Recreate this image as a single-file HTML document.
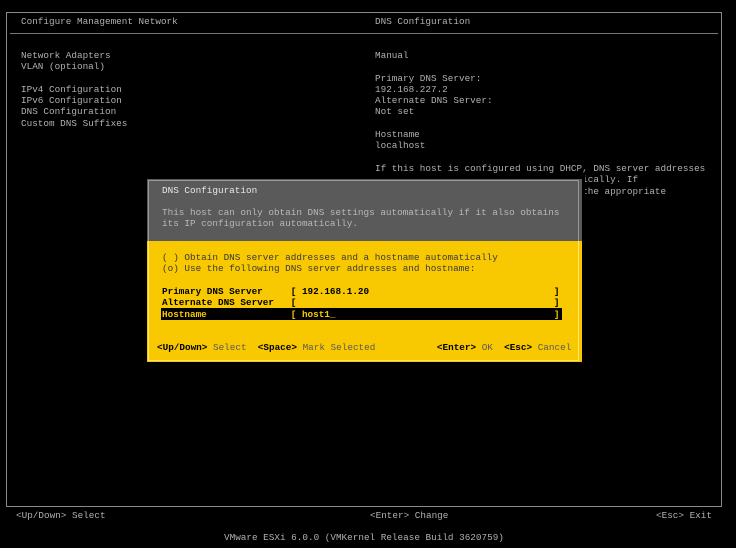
<!DOCTYPE html>
<html><head><style>
body{margin:0;width:736px;height:548px;background:#000;overflow:hidden;position:relative;font-family:"Liberation Mono",monospace;font-size:9.33px;line-height:11.3px;}
.t{position:absolute;white-space:pre;color:#b0b0b0}
.b{position:absolute}
</style></head><body>
<div class="b" style="left:6px;top:12px;width:714px;height:493px;border:1px solid #8a8a8a"></div>
<div class="b" style="left:10px;top:33px;width:708px;height:1px;background:#777"></div>
<div class="t" style="left:21px;top:16px">Configure Management Network</div>
<div class="t" style="left:375px;top:16px">DNS Configuration</div>
<div class="t" style="left:21px;top:50px">Network Adapters
VLAN (optional)

IPv4 Configuration
IPv6 Configuration
DNS Configuration
Custom DNS Suffixes</div>
<div class="t" style="left:375px;top:50px">Manual

Primary DNS Server:
192.168.227.2
Alternate DNS Server:
Not set

Hostname
localhost

If this host is configured using DHCP, DNS server addresses
and hostnames can be obtained automatically. If
not, please provide DNS settings for the appropriate</div>
<div class="t" style="left:16px;top:510px">&lt;Up/Down&gt; Select</div>
<div class="t" style="left:370px;top:510px">&lt;Enter&gt; Change</div>
<div class="t" style="left:656px;top:510px">&lt;Esc&gt; Exit</div>
<div class="t" style="left:224px;top:532px">VMware ESXi 6.0.0 (VMKernel Release Build 3620759)</div>

<div class="b" style="left:144px;top:175px;width:441px;height:191px;background:#000"></div>
<div class="b" style="left:147px;top:179px;width:435px;height:62px;background:#5a5a5a"></div>
<div class="b" style="left:148px;top:180px;width:431px;height:61px;border:1px solid #999;border-bottom:none;box-sizing:border-box"></div>
<div class="b" style="left:147px;top:241px;width:435px;height:121px;background:#f8c800"></div>
<div class="b" style="left:148px;top:241px;width:431px;height:120px;border:1px solid #fde27a;border-top:none;box-sizing:border-box"></div>
<div class="t" style="left:162px;top:185px;color:#e8e8e8">DNS Configuration</div>
<div class="t" style="left:162px;top:207px;color:#b8b8b8">This host can only obtain DNS settings automatically if it also obtains
its IP configuration automatically.</div>
<div class="t" style="left:162px;top:252px;color:#3a3a3a">( ) Obtain DNS server addresses and a hostname automatically
(o) Use the following DNS server addresses and hostname:</div>
<div class="b" style="left:161px;top:308px;width:401px;height:12px;background:#000"></div>
<div class="t" style="left:162px;top:286px;color:#000;font-weight:bold">Primary DNS Server     [ 192.168.1.20                                 ]
Alternate DNS Server   [                                              ]
<span style="color:#f8c800">Hostname               [ host1_                                       ]</span></div>
<div class="t" style="left:157px;top:342px;color:#000;font-weight:bold">&lt;Up/Down&gt; <span style="color:#5a5a5a;font-weight:normal">Select</span>  &lt;Space&gt; <span style="color:#5a5a5a;font-weight:normal">Mark Selected</span>           &lt;Enter&gt; <span style="color:#5a5a5a;font-weight:normal">OK</span>  &lt;Esc&gt; <span style="color:#5a5a5a;font-weight:normal">Cancel</span></div>
</body></html>
